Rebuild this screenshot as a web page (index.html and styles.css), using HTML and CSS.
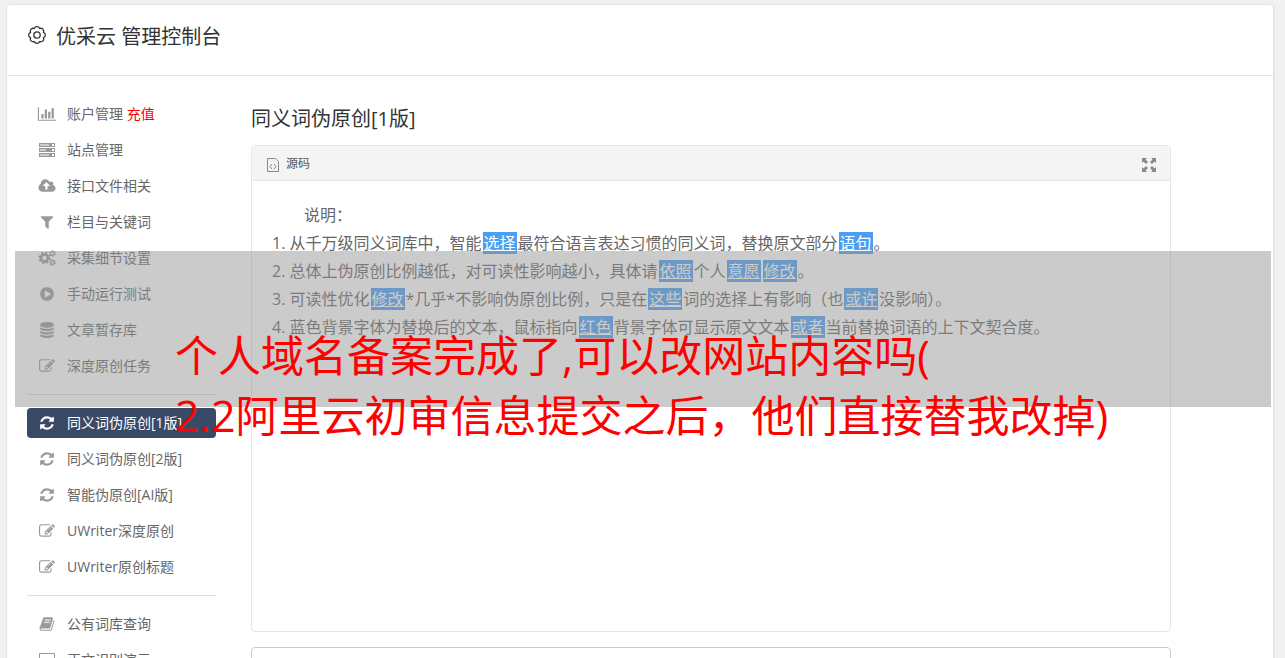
FILE: index.html
```html
<!DOCTYPE html>
<html lang="zh-CN">

<head>
    <meta charset="utf-8">
    <title>优采云 管理控制台</title>
    <link rel="stylesheet" href="styles.css">
</head>

<body>
    <!-- icons used more than once -->
    <svg class="sprite" aria-hidden="true">
        <symbol id="edit" viewBox="0 0 1792 1792">
            <path d="M888 1184l116-116-152-152-116 116v56h96v96h56zm440-720q-16-16-33 1l-350 350q-17 17-1 33t33-1l350-350q17-17 1-33zm80 594v190q0 119-84.5 203.5t-203.5 84.5h-832q-119 0-203.5-84.5t-84.5-203.5v-832q0-119 84.5-203.5t203.5-84.5h832q63 0 117 25 15 7 18 23 3 17-9 29l-49 49q-14 14-32 8-23-6-45-6h-832q-66 0-113 47t-47 113v832q0 66 47 113t113 47h832q66 0 113-47t47-113v-126q0-13 9-22l64-64q15-15 35-7t20 29zm-96-738l288 288-672 672h-288v-288zm444 132l-92 92-288-288 92-92q28-28 68-28t68 28l152 152q28 28 28 68t-28 68z" />
        </symbol>
        <symbol id="refresh" viewBox="0 0 1792 1792">
            <path d="M1639 1056q0 5-1 7-64 268-268 434.5t-478 166.5q-146 0-282.5-55t-243.5-157l-129 129q-19 19-45 19t-45-19-19-45v-448q0-26 19-45t45-19h448q26 0 45 19t19 45-19 45l-137 137q71 66 161 102t187 36q134 0 250-65t186-179q11-17 53-117 8-23 30-23h192q13 0 22.5 9.5t9.5 22.5zm25-800v448q0 26-19 45t-45 19h-448q-26 0-45-19t-19-45 19-45l138-138q-148-137-349-137-134 0-250 65t-186 179q-11 17-53 117-8 23-30 23h-199q-13 0-22.5-9.5t-9.5-22.5v-7q65-268 270-434.5t480-166.5q146 0 284 55.5t245 156.5l130-129q19-19 45-19t45 19 19 45z" />
        </symbol>
    </svg>

    <div class="card">
        <header class="card-header">
            <svg class="gear" viewBox="0 0 20 20">
                <path d="M16.5 7.300A2.900 2.900 0 0 1 16.500 12.700A2.900 2.900 0 0 1 12.700 16.500A2.900 2.900 0 0 1 7.300 16.500A2.900 2.900 0 0 1 3.500 12.700A2.900 2.900 0 0 1 3.500 7.300A2.900 2.900 0 0 1 7.300 3.500A2.900 2.900 0 0 1 12.700 3.500A2.900 2.900 0 0 1 16.500 7.300Z" />
                <circle cx="10" cy="10" r="3.200" />
            </svg>
            <h1>优采云 管理控制台</h1>
        </header>

        <div class="columns">
            <nav class="sidebar">
                <a href="#"><svg class="icon wide" viewBox="0 0 2048 1792"><path d="M640 896v512h-256v-512h256zm384-512v1024h-256v-1024h256zm1024 1152v128h-2048v-1536h128v1408h1920zm-640-896v768h-256v-768h256zm384-384v1152h-256v-1152h256z" /></svg><span>账户管理 <span class="red">充值</span></span></a>
                <a href="#"><svg class="icon wide" viewBox="0 0 18 16"><path fill-rule="evenodd" d="M1 1h16v4H1zM2 2.500h9v1H2zM14 2h2v2h-2zM1 6h16v4H1zM2 7.500h6v1H2zM14 7h2v2h-2zM1 11h16v4H1zM2 12.500h9v1H2zM14 12h2v2h-2z" /></svg><span>站点管理</span></a>
                <a href="#"><svg class="icon wide" viewBox="0 0 1920 1792"><path d="M1280 864q0-14-9-23l-352-352q-9-9-23-9t-23 9l-351 351q-10 12-10 24 0 14 9 23t23 9h224v352q0 13 9.500 22.500t22.500 9.500h192q13 0 22.500-9.500t9.500-22.500v-352h224q13 0 22.500-9.500t9.500-22.500zm640 288q0 159-112.500 271.500t-271.500 112.500h-1088q-185 0-316.500-131.500t-131.500-316.500q0-130 70-240t188-165q-2-30-2-43 0-212 150-362t362-150q156 0 285.500 87t188.500 231q71-62 166-62 106 0 181 75t75 181q0 76-41 138 130 31 213.500 135.500t83.500 238.500z" /></svg><span>接口文件相关</span></a>
                <a href="#"><svg class="icon" viewBox="0 0 1792 1792"><path d="M1595 295q17 41-14 70l-493 493v742q0 42-39 59-13 5-25 5-27 0-45-19l-256-256q-19-19-19-45v-486l-493-493q-31-29-14-70 17-39 59-39h1280q42 0 59 39z" /></svg><span>栏目与关键词</span></a>
                <a href="#"><svg class="icon wide" viewBox="0 0 18 16">
                        <g class="cogs">
                            <circle cx="6.500" cy="8" r="3.500" stroke-width="2.600" />
                            <circle cx="6.500" cy="8" r="5.300" stroke-width="1.800" stroke-dasharray="2.080 2.080" />
                            <circle cx="14.500" cy="3.500" r="1.800" stroke-width="1.300" />
                            <circle cx="14.500" cy="3.500" r="2.800" stroke-width="1.100" stroke-dasharray="1.470 1.470" />
                            <circle cx="14.500" cy="12.500" r="1.800" stroke-width="1.300" />
                            <circle cx="14.500" cy="12.500" r="2.800" stroke-width="1.100" stroke-dasharray="1.470 1.470" />
                        </g>
                    </svg><span>采集细节设置</span></a>
                <a href="#"><svg class="icon" viewBox="0 0 1792 1792"><path d="M896 128q209 0 385.500 103t279.500 279.500 103 385.500-103 385.500-279.500 279.500-385.500 103-385.500-103-279.500-279.500-103-385.500 103-385.500 279.500-279.500 385.500-103zm384 823q32-18 32-55t-32-55l-544-320q-31-19-64-1-32 19-32 56v640q0 37 32 56 16 8 32 8 17 0 32-9z" /></svg><span>手动运行测试</span></a>
                <a href="#"><svg class="icon" viewBox="0 0 1792 1792"><path d="M896 768q237 0 443-43t325-127v170q0 69-103 128t-280 93.500-385 34.500-385-34.500-280-93.500-103-128v-170q119 84 325 127t443 43zm0 768q237 0 443-43t325-127v170q0 69-103 128t-280 93.500-385 34.500-385-34.500-280-93.500-103-128v-170q119 84 325 127t443 43zm0-384q237 0 443-43t325-127v170q0 69-103 128t-280 93.500-385 34.500-385-34.500-280-93.500-103-128v-170q119 84 325 127t443 43zm0-1152q208 0 385 34.500t280 93.500 103 128v128q0 69-103 128t-280 93.500-385 34.500-385-34.500-280-93.500-103-128v-128q0-69 103-128t280-93.500 385-34.500z" /></svg><span>文章暂存库</span></a>
                <a href="#"><svg class="icon"><use href="#edit" /></svg><span>深度原创任务</span></a>
                <hr>
                <a href="#" class="active"><svg class="icon"><use href="#refresh" /></svg><span>同义词伪原创[1版]</span></a>
                <a href="#"><svg class="icon"><use href="#refresh" /></svg><span>同义词伪原创[2版]</span></a>
                <a href="#"><svg class="icon"><use href="#refresh" /></svg><span>智能伪原创[AI版]</span></a>
                <a href="#"><svg class="icon"><use href="#edit" /></svg><span>UWriter深度原创</span></a>
                <a href="#"><svg class="icon"><use href="#edit" /></svg><span>UWriter原创标题</span></a>
                <hr>
                <a href="#"><svg class="icon" viewBox="0 0 1792 1792"><path d="M1703 478q40 57 18 129l-275 906q-19 64-76.500 107.500t-122.500 43.500h-923q-77 0-148.500-53.500t-99.500-131.500q-24-67-2-127 0-4 3-27t4-37q1-8-3-21.500t-3-19.500q2-11 8-21t16.500-23.500 16.500-23.500q23-38 45-91.500t30-91.500q3-10 .5-30t-.5-28q3-11 17-28t17-23q21-36 42-92t25-90q1-9-2.500-32t.5-28q4-13 22-30.500t22-22.500q19-26 42.500-84.500t27.500-96.500q1-8-3-25.500t-2-26.500q2-8 9-18t18-23 17-21q8-12 16.500-30.500t15-35 16-36 19.500-32 26.500-23.500 36-11.500 47.500 5.500l-1 3q38-9 51-9h761q74 0 114 56t18 130l-274 906q-36 119-71.500 153.500t-128.500 34.500h-869q-27 0-38 15-11 16-1 43 24 70 144 70h923q29 0 56-15.500t35-41.500l300-987q7-22 5-57 38 15 59 43zm-1064 2q-4 13 2 22.500t20 9.500h608q13 0 25.500-9.500t16.500-22.500l21-64q4-13-2-22.500t-20-9.500h-608q-13 0-25.500 9.500t-16.500 22.500zm-83 256q-4 13 2 22.500t20 9.500h608q13 0 25.500-9.500t16.500-22.500l21-64q4-13-2-22.500t-20-9.500h-608q-13 0-25.500 9.500t-16.500 22.500z" /></svg><span>公有词库查询</span></a>
                <a href="#"><svg class="icon wide" viewBox="0 0 18 16"><path fill-rule="evenodd" d="M2 1h14a1 1 0 0 1 1 1v10a1 1 0 0 1-1 1h-5v2h2v1H5v-1h2v-2H2a1 1 0 0 1-1-1V2a1 1 0 0 1 1-1zM2 2v10h14V2z" /></svg><span>正文识别演示</span></a>
            </nav>

            <main class="content">
                <h2 id="title">同义词伪原创[1版]</h2>
                <div class="editor">
                    <div class="toolbar">
                        <button type="button">
                            <svg class="source" viewBox="0 0 12 14">
                                <path d="M.5.5h8l3 3v10H.5zM5 6L3 8.500 5 11M7 6l2 2.500L7 11" />
                            </svg>
                            源码
                        </button>
                        <button type="button" aria-label="全屏">
                            <svg class="expand" viewBox="0 0 14 14">
                                <path d="M0 0h5L3.500 1.500 6 4 4 6 1.500 3.500 0 5zM14 0v5l-1.500-1.500L10 6 8 4l2.500-2.500L9 0zM0 14V9l1.500 1.500L4 8l2 2-2.500 2.500L5 14zM14 14H9l1.500-1.500L8 10l2-2 2.500 2.500L14 9z" />
                            </svg>
                        </button>
                    </div>
                    <div class="text">
                        <p>说明：</p>
                        <ol>
                            <li>从千万级同义词库中，智能<mark>选择</mark>最符合语言表达习惯的同义词，替换原文部分<mark>语句</mark>。</li>
                            <li>总体上伪原创比例越低，对可读性影响越小，具体请<mark>依照</mark>个人<mark>意愿</mark><mark>修改</mark>。</li>
                            <li>可读性优化<mark>修改</mark>*几乎*不影响伪原创比例，只是在<mark>这些</mark>词的选择上有影响（也<mark>或许</mark>没影响）。</li>
                            <li>蓝色背景字体为替换后的文本，鼠标指向<mark>红色</mark>背景字体可显示原文文本<mark>或者</mark>当前替换词语的上下文契合度。</li>
                        </ol>
                    </div>
                </div>
                <textarea class="result" aria-labelledby="title"></textarea>
            </main>
        </div>
    </div>

    <div class="banner">个人域名备案完成了,可以改网站内容吗(<br>2.2阿里云初审信息提交之后，他们直接替我改掉)</div>
</body>

</html>
```

FILE: styles.css
```css
* {
    box-sizing: border-box;
}

body {
    margin: 0;
    padding: 4px 10px 0 6px;
    height: 100vh;
    overflow: hidden;
    background: #f1f1f1;
    color: #666;
    font-family: "Open Sans", "Noto Sans CJK SC", sans-serif;
    font-size: 14px;
}

.sprite {
    display: none;
}

.card {
    background: #fff;
    border: 1px solid #e5e5e5;
    border-right-width: 2px;
    border-radius: 4px;
}

.card-header {
    display: flex;
    gap: 9px;
    height: 71px;
    padding: 16px 20px;
    border-bottom: 1px solid #e5e5e5;
}

h1,
h2 {
    margin: 0;
    color: #333;
    font-size: 20px;
    font-weight: 400;
    line-height: 32px;
}

.gear {
    width: 20px;
    height: 28px;
    fill: none;
    stroke: #333;
    stroke-width: 1.3;
}

.columns {
    display: flex;
    gap: 35px;
    padding: 23px 20px;
}

.sidebar {
    display: flex;
    flex-direction: column;
    flex: 0 0 189px;
    gap: 6px;
}

.sidebar a {
    display: flex;
    align-items: center;
    gap: 10px;
    height: 30px;
    padding-left: 10px;
    border-radius: 4px;
    color: #666;
    line-height: 30px;
    text-decoration: none;
    white-space: nowrap;
}

.sidebar .active {
    background: #3a4a66;
    color: #fff;
}

.sidebar hr {
    width: 100%;
    margin: 7px 0;
    border: 0;
    border-top: 1px solid #ddd;
}

.icon {
    width: 20px;
    height: 16px;
    fill: #999;
}

.active .icon {
    fill: #fff;
}

.cogs {
    fill: none;
    stroke: #999;
}

.red {
    color: #f00;
}

.content {
    flex: 1;
    max-width: 920px;
    padding-top: 4px;
}

.editor {
    min-height: 487px;
    margin: 10px 0 15px;
    border: 1px solid #e5e5e5;
    border-radius: 4px;
}

.toolbar {
    display: flex;
    justify-content: space-between;
    height: 35px;
    padding: 0 14px;
    background: #f4f4f4;
    border-bottom: 1px solid #e5e5e5;
}

.toolbar button {
    display: flex;
    align-items: center;
    gap: 6px;
    padding: 0;
    border: 0;
    background: none;
    color: #555;
    font: inherit;
    font-size: 12px;
}

.toolbar svg {
    width: 14px;
    height: 14px;
    margin-top: 3px;
}

.source {
    fill: none;
    stroke: #888;
}

.expand {
    fill: #888;
}

.text {
    padding: 20px;
    font-size: 16px;
    line-height: 28px;
}

.text p {
    margin: 0;
    text-indent: 2em;
}

.text ol {
    margin: 0;
    padding: 0;
    list-style-position: inside;
}

mark {
    margin: 0 1px;
    padding: 0 1px;
    background: #4a9ff5;
    color: #fff;
    text-decoration: underline;
}

.result {
    display: block;
    width: 100%;
    height: 200px;
    border: 1px solid #ccc;
    border-radius: 4px;
    resize: none;
}

.banner {
    position: absolute;
    top: 251px;
    left: 15px;
    right: 14px;
    height: 156px;
    padding: 75px 0 0 160px;
    background: rgba(146, 146, 146, 0.48);
    color: #f00;
    font-size: 43px;
    line-height: 60px;
    white-space: nowrap;
}
```
